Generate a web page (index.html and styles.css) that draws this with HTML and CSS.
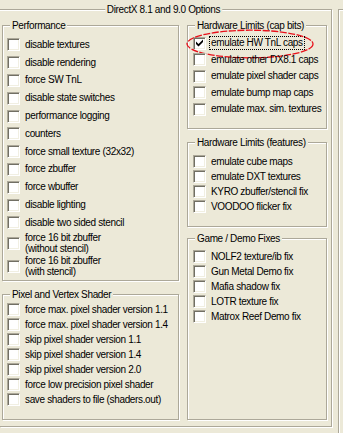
FILE: index.html
```html
<!DOCTYPE html>
<html lang="en">
<head>
  <meta charset="UTF-8" />
  <meta name="viewport" content="width=device-width, initial-scale=1.0"/>
  <title>DirectX 8.1 and 9.0 Options</title>
  <link rel="stylesheet" href="styles.css">
</head>
<body>
  <div class="dialog">
    <div class="group outer">
      <span class="group-title title-center">DirectX 8.1 and 9.0 Options</span>

      <div class="col">
        <div class="group perf">
          <span class="group-title">Performance</span>
          <label class="opt"><span class="check"></span><span class="opt-text">disable textures</span></label>
          <label class="opt"><span class="check"></span><span class="opt-text">disable rendering</span></label>
          <label class="opt"><span class="check"></span><span class="opt-text">force SW TnL</span></label>
          <label class="opt"><span class="check"></span><span class="opt-text">disable state switches</span></label>
          <label class="opt"><span class="check"></span><span class="opt-text">performance logging</span></label>
          <label class="opt"><span class="check"></span><span class="opt-text">counters</span></label>
          <label class="opt"><span class="check"></span><span class="opt-text">force small texture (32x32)</span></label>
          <label class="opt"><span class="check"></span><span class="opt-text">force zbuffer</span></label>
          <label class="opt"><span class="check"></span><span class="opt-text">force wbuffer</span></label>
          <label class="opt"><span class="check"></span><span class="opt-text">disable lighting</span></label>
          <label class="opt"><span class="check"></span><span class="opt-text">disable two sided stencil</span></label>
          <label class="opt tall"><span class="check"></span><span class="opt-text">force 16 bit zbuffer<br>(without stencil)</span></label>
          <label class="opt tall"><span class="check"></span><span class="opt-text">force 16 bit zbuffer<br>(with stencil)</span></label>
        </div>

        <div class="group shader">
          <span class="group-title">Pixel and Vertex Shader</span>
          <label class="opt"><span class="check"></span><span class="opt-text">force max. pixel shader version 1.1</span></label>
          <label class="opt"><span class="check"></span><span class="opt-text">force max. pixel shader version 1.4</span></label>
          <label class="opt"><span class="check"></span><span class="opt-text">skip pixel shader version 1.1</span></label>
          <label class="opt"><span class="check"></span><span class="opt-text">skip pixel shader version 1.4</span></label>
          <label class="opt"><span class="check"></span><span class="opt-text">skip pixel shader version 2.0</span></label>
          <label class="opt"><span class="check"></span><span class="opt-text">force low precision pixel shader</span></label>
          <label class="opt"><span class="check"></span><span class="opt-text">save shaders to file (shaders.out)</span></label>
        </div>
      </div>

      <div class="col">
        <div class="group caps">
          <span class="group-title">Hardware Limits (cap bits)</span>
          <label class="opt">
            <span class="check checked">
              <svg width="7" height="8" viewBox="0 0 7 8"><polygon points="0,2.5 2.5,5 7,0.5 7,3 2.5,7.5 0,5" fill="#000"/></svg>
            </span>
            <span class="opt-text focused">emulate HW TnL caps</span>
            <svg class="circle" width="134" height="32" viewBox="0 0 134 32">
              <ellipse cx="66" cy="16" rx="63" ry="13.8" fill="none" stroke="#e8101a" stroke-width="1.3" stroke-dasharray="7 1.5"/>
            </svg>
          </label>
          <label class="opt"><span class="check"></span><span class="opt-text">emulate other DX8.1 caps</span></label>
          <label class="opt"><span class="check"></span><span class="opt-text">emulate pixel shader caps</span></label>
          <label class="opt"><span class="check"></span><span class="opt-text">emulate bump map caps</span></label>
          <label class="opt"><span class="check"></span><span class="opt-text">emulate max. sim. textures</span></label>
        </div>

        <div class="group features">
          <span class="group-title">Hardware Limits (features)</span>
          <label class="opt"><span class="check"></span><span class="opt-text">emulate cube maps</span></label>
          <label class="opt"><span class="check"></span><span class="opt-text">emulate DXT textures</span></label>
          <label class="opt"><span class="check"></span><span class="opt-text">KYRO zbuffer/stencil fix</span></label>
          <label class="opt"><span class="check"></span><span class="opt-text">VOODOO flicker fix</span></label>
        </div>

        <div class="group game">
          <span class="group-title">Game / Demo Fixes</span>
          <label class="opt"><span class="check"></span><span class="opt-text">NOLF2 texture/ib fix</span></label>
          <label class="opt"><span class="check"></span><span class="opt-text">Gun Metal Demo fix</span></label>
          <label class="opt"><span class="check"></span><span class="opt-text">Mafia shadow fix</span></label>
          <label class="opt"><span class="check"></span><span class="opt-text">LOTR texture fix</span></label>
          <label class="opt"><span class="check"></span><span class="opt-text">Matrox Reef Demo fix</span></label>
        </div>
      </div>
    </div>

    <div class="group side"></div>
  </div>
</body>
</html>
```

FILE: styles.css
```css
html, body {
  margin: 0;
  background: #ece9d8;
  color: #000;
  font-family: 'Liberation Sans', Arial, sans-serif;
  font-size: 10px;
  letter-spacing: -0.35px;
  overflow: hidden;
}
.dialog {
  display: flex;
  align-items: flex-start;
  padding-top: 9px;
  height: 424px;
}
.group {
  position: relative;
  box-sizing: border-box;
  border: 1px solid #aca899;
  box-shadow: inset 1px 1px 0 #fff, 1px 1px 0 #fff;
}
.group-title {
  position: absolute;
  top: -6px;
  left: 7px;
  padding: 0 2px;
  line-height: 12px;
  background: #ece9d8;
  white-space: nowrap;
}
.title-center {
  left: 50%;
  transform: translateX(-50%);
  margin-left: -2px;
}
/* the dialog's own frame starts just left of the visible area */
.outer {
  border-left: 0;
  box-shadow: inset 0 1px 0 #fff, 1px 1px 0 #fff;
  width: 332px;
  height: 418px;
  padding: 15px 4px 6px 2px;
  display: grid;
  grid-template-columns: 177px 140px;
  column-gap: 8px;
}
.side {
  margin-left: 6px;
  width: 5px;
  height: 424px;
  flex-shrink: 0;
  border-right: 0;
  border-bottom: 0;
  box-shadow: inset 1px 1px 0 #fff;
}
.col {
  display: flex;
  flex-direction: column;
}
.opt {
  position: relative;
  display: flex;
  align-items: center;
  gap: 5px;
  height: 15px;
  white-space: nowrap;
}
.opt-text {
  line-height: 12px;
}
.check {
  box-sizing: border-box;
  width: 13px;
  height: 13px;
  flex-shrink: 0;
  background: #fff;
  border: 1px solid;
  border-color: #aca899 #fff #fff #aca899;
  box-shadow: inset 1px 1px 0 #716f64, inset -1px -1px 0 #f1efe2;
}
.checked {
  display: flex;
  align-items: center;
  justify-content: center;
}
.focused {
  margin-left: -2px;
  padding: 0 1px;
  border: 1px dotted #000;
}
.circle {
  position: absolute;
  left: -9px;
  top: -7px;
  pointer-events: none;
}

/* left column */
.perf {
  height: 256px;
  padding: 10px 4px 0;
}
.perf .opt {
  height: 17.8px;
}
.perf .opt.tall {
  height: 23px;
}
.tall .opt-text {
  line-height: 11px;
}
.shader {
  margin-top: 13px;
  flex: 1;
  padding: 7px 4px 0;
}

/* right column */
.caps {
  height: 104px;
  padding: 9px 5px 0;
}
.caps .opt {
  height: 16.5px;
}
.features {
  margin-top: 13px;
  height: 85px;
  padding: 11px 5px 0;
}
.game {
  margin-top: 11px;
  flex: 1;
  padding: 10px 5px 0;
}
```
